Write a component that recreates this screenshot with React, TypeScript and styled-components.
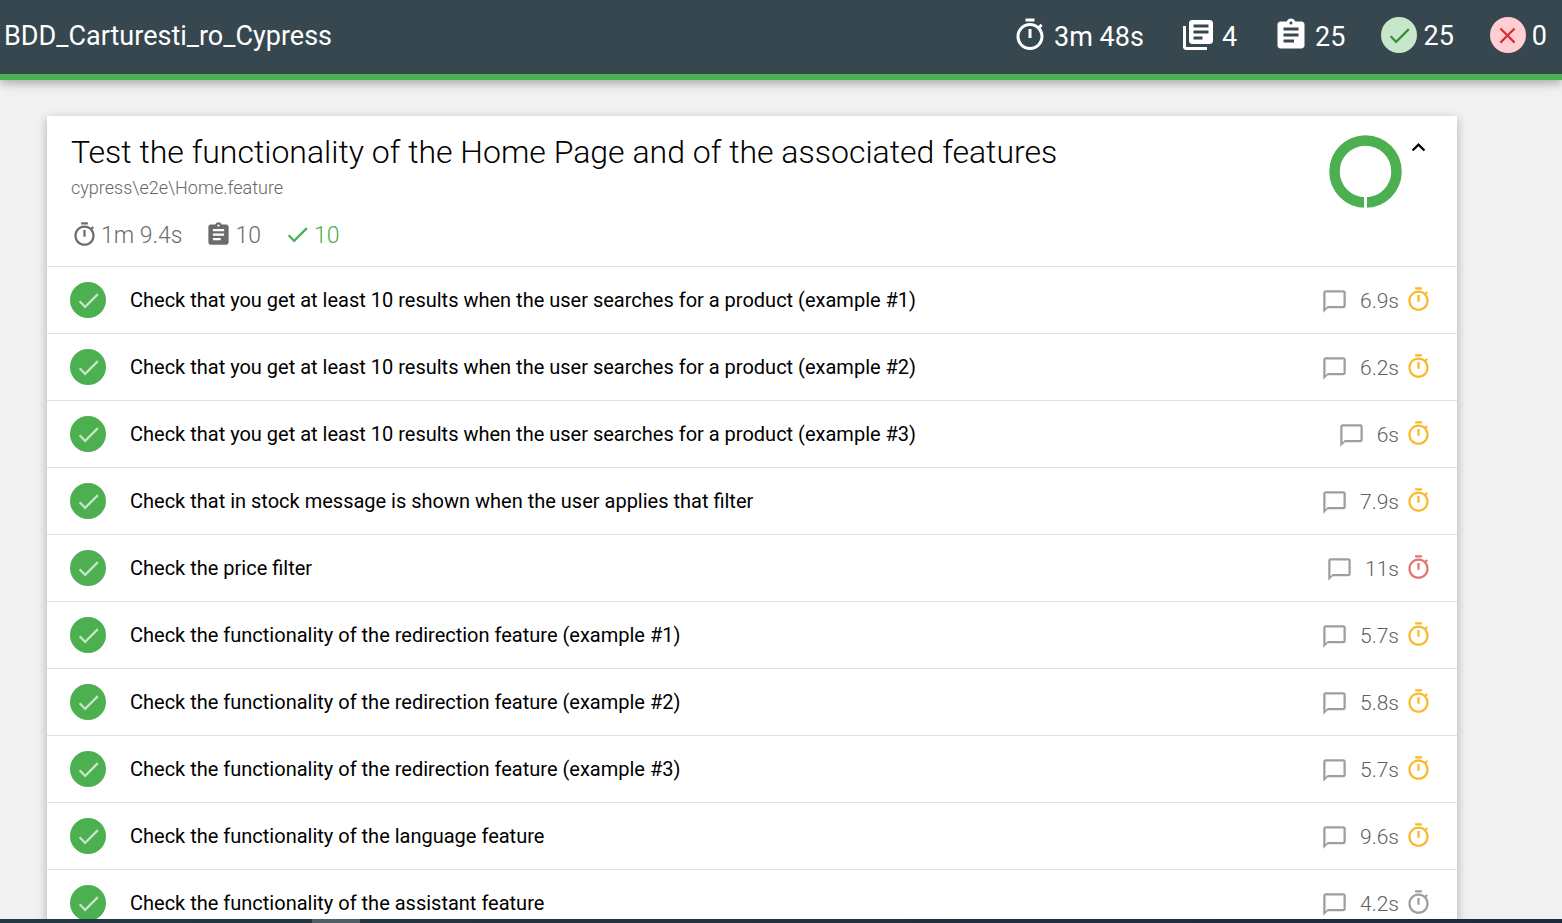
import React from "react";
import styled, { createGlobalStyle } from "styled-components";

const GlobalStyle = createGlobalStyle`
  *, *::before, *::after { box-sizing: border-box; }
  body {
    margin: 0;
    background: #f2f2f2;
    color: #000;
    font-family: Roboto, "Liberation Sans", sans-serif;
  }
`;

const icons = {
  timer:
    "M15 1H9v2h6V1zm-4 13h2V8h-2v6zm8.03-6.61l1.42-1.42c-.43-.51-.9-.99-1.41-1.41l-1.42 1.42C16.07 4.74 14.12 4 12 4c-4.97 0-9 4.03-9 9s4.02 9 9 9 9-4.03 9-9c0-2.12-.74-4.07-1.97-5.61zM12 20c-3.87 0-7-3.13-7-7s3.13-7 7-7 7 3.13 7 7-3.13 7-7 7z",
  books:
    "M4 6H2v14c0 1.1.9 2 2 2h14v-2H4V6zm16-4H8c-1.1 0-2 .9-2 2v12c0 1.1.9 2 2 2h12c1.1 0 2-.9 2-2V4c0-1.1-.9-2-2-2zm-1 9H9V9h10v2zm-4 4H9v-2h6v2zm4-8H9V5h10v2z",
  assignment:
    "M19 3h-4.18C14.4 1.84 13.3 1 12 1c-1.3 0-2.4.84-2.82 2H5c-1.1 0-2 .9-2 2v14c0 1.1.9 2 2 2h14c1.1 0 2-.9 2-2V5c0-1.1-.9-2-2-2zm-7 0c.55 0 1 .45 1 1s-.45 1-1 1-1-.45-1-1 .45-1 1-1zm2 14H7v-2h7v2zm3-4H7v-2h10v2zm0-4H7V7h10v2z",
  check: "M9 16.17L4.83 12l-1.42 1.41L9 19 21 7l-1.41-1.41z",
  close:
    "M19 6.41L17.59 5 12 10.59 6.41 5 5 6.41 10.59 12 5 17.59 6.41 19 12 13.41 17.59 19 19 17.59 13.41 12z",
  chat: "M20 2H4c-1.1 0-2 .9-2 2v18l4-4h14c1.1 0 2-.9 2-2V4c0-1.1-.9-2-2-2zm0 14H6l-2 2V4h16v12z",
  expandLess: "M12 8l-6 6 1.41 1.41L12 10.83l4.59 4.58L18 14z",
};

const Svg = styled.svg`
  display: block;
  flex: none;
  fill: currentColor;
`;

function Icon({ name, size = 27 }: { name: keyof typeof icons; size?: number }) {
  return (
    <Svg width={size} height={size} viewBox="0 0 24 24" aria-hidden="true">
      <path d={icons[name]} />
    </Svg>
  );
}

const Page = styled.div`
  display: flex;
  flex-direction: column;
  height: 100vh;
  overflow: hidden;
`;

const Navbar = styled.header`
  display: flex;
  align-items: flex-start;
  justify-content: space-between;
  flex: none;
  height: 80px;
  padding: 17px 15px 0 4px;
  border-bottom: 6px solid #4caf50;
  background: #37474f;
  color: #fff;
  box-shadow: 0 3px 8px rgba(0, 0, 0, 0.2), 0 3px 15px rgba(0, 0, 0, 0.14);
  z-index: 1;
`;

const ReportTitle = styled.h1`
  margin: 0;
  font-size: 27px;
  line-height: 38px;
  font-weight: 400;
`;

const Totals = styled.ul`
  display: flex;
  gap: 36px;
  margin: 0;
  padding: 0;
  list-style: none;
`;

const Total = styled.li`
  display: flex;
  align-items: flex-start;
  gap: 6px;
  font-size: 27px;
  line-height: 38px;
`;

const TotalCount = styled.span`
  padding-top: 1px;
`;

const Badge = styled.span<{ $bg: string; $fg: string }>`
  display: flex;
  align-items: center;
  justify-content: center;
  flex: none;
  width: 36px;
  height: 36px;
  border-radius: 50%;
  background: ${(p) => p.$bg};
  color: ${(p) => p.$fg};
`;

const Main = styled.main`
  flex: 1;
  min-height: 0;
  overflow: hidden;
  padding: 36px 105px 0 47px;
`;

const SuiteCard = styled.section`
  background: #fff;
  box-shadow: 0 3px 8px rgba(0, 0, 0, 0.18), 0 3px 15px rgba(0, 0, 0, 0.12);
`;

const SuiteHeader = styled.header`
  display: flex;
  align-items: flex-start;
  justify-content: space-between;
  height: 150px;
  padding: 16px 25px 0 24px;
`;

const SuiteTitle = styled.h2`
  margin: 0;
  font-size: 32px;
  line-height: 40px;
  font-weight: 300;
`;

const SuiteFile = styled.h3`
  margin: 4px 0 0;
  color: #666;
  font-size: 18px;
  line-height: 24px;
  font-weight: 300;
`;

const SuiteStats = styled.ul`
  display: flex;
  gap: 23px;
  margin: 21px 0 0;
  padding: 0;
  list-style: none;
`;

const SuiteStat = styled.li<{ $color?: string }>`
  display: flex;
  align-items: flex-start;
  gap: 3px;
  color: ${(p) => p.$color ?? "#6c6c6c"};
  font-size: 23px;
  line-height: 30px;
  font-weight: 300;
`;

const SuiteAside = styled.div`
  display: flex;
  align-items: flex-start;
  gap: 3px;
`;

const Chart = styled.svg`
  display: block;
  margin-top: 3px;
`;

const ToggleButton = styled.button`
  display: block;
  padding: 2px 0 0;
  border: 0;
  background: none;
  color: #000;
  cursor: pointer;
`;

const TestList = styled.ul`
  margin: 0;
  padding: 0;
  list-style: none;
`;

const TestRow = styled.li`
  border-top: 1px solid #e0e0e0;
`;

const TestButton = styled.button`
  display: flex;
  align-items: center;
  width: 100%;
  height: 66px;
  padding: 0 25px 0 23px;
  border: 0;
  background: none;
  color: #000;
  font: inherit;
  text-align: left;
  cursor: pointer;
`;

const TestName = styled.span`
  flex: 1;
  padding-left: 24px;
  font-size: 20px;
  line-height: 24px;
`;

const TestInfo = styled.span`
  display: flex;
  align-items: flex-end;
  color: #9e9e9e;
`;

const Duration = styled.span`
  padding: 1px 6px 1px 12px;
  color: #606060;
  font-size: 21px;
  line-height: 26px;
  font-weight: 300;
`;

const Speed = styled.span<{ $color: string }>`
  padding-bottom: 2px;
  color: ${(p) => p.$color};
`;

const Taskbar = styled.footer`
  display: flex;
  flex: none;
  height: 4px;
  padding-left: 312px;
  background: linear-gradient(90deg, #213a44, #1b2a42);
  z-index: 1;
`;

const TaskbarItem = styled.span`
  width: 48px;
  background: #4e5f67;
`;

const speedColors = { medium: "#fbb829", slow: "#e57373", fast: "#9e9e9e" };

const tests: { name: string; time: string; speed: keyof typeof speedColors }[] = [
  { name: "Check that you get at least 10 results when the user searches for a product (example #1)", time: "6.9s", speed: "medium" },
  { name: "Check that you get at least 10 results when the user searches for a product (example #2)", time: "6.2s", speed: "medium" },
  { name: "Check that you get at least 10 results when the user searches for a product (example #3)", time: "6s", speed: "medium" },
  { name: "Check that in stock message is shown when the user applies that filter", time: "7.9s", speed: "medium" },
  { name: "Check the price filter", time: "11s", speed: "slow" },
  { name: "Check the functionality of the redirection feature (example #1)", time: "5.7s", speed: "medium" },
  { name: "Check the functionality of the redirection feature (example #2)", time: "5.8s", speed: "medium" },
  { name: "Check the functionality of the redirection feature (example #3)", time: "5.7s", speed: "medium" },
  { name: "Check the functionality of the language feature", time: "9.6s", speed: "medium" },
  { name: "Check the functionality of the assistant feature", time: "4.2s", speed: "fast" },
];

export default function App() {
  return (
    <Page>
      <GlobalStyle />
      <Navbar>
        <ReportTitle>BDD_Carturesti_ro_Cypress</ReportTitle>
        <Totals>
          <Total><Icon name="timer" size={36} /><TotalCount>3m 48s</TotalCount></Total>
          <Total><Icon name="books" size={36} /><TotalCount>4</TotalCount></Total>
          <Total><Icon name="assignment" size={36} /><TotalCount>25</TotalCount></Total>
          <Total>
            <Badge $bg="#c8e6c9" $fg="#388e3c"><Icon name="check" /></Badge>25
          </Total>
          <Total>
            <Badge $bg="#ffcdd2" $fg="#d32f2f"><Icon name="close" /></Badge>0
          </Total>
        </Totals>
      </Navbar>
      <Main>
        <SuiteCard>
          <SuiteHeader>
            <div>
              <SuiteTitle>Test the functionality of the Home Page and of the associated features</SuiteTitle>
              <SuiteFile>cypress\e2e\Home.feature</SuiteFile>
              <SuiteStats>
                <SuiteStat><Icon name="timer" />1m 9.4s</SuiteStat>
                <SuiteStat><Icon name="assignment" />10</SuiteStat>
                <SuiteStat $color="#4caf50"><Icon name="check" />10</SuiteStat>
              </SuiteStats>
            </div>
            <SuiteAside>
              <Chart width="73" height="73" viewBox="0 0 73 73" role="img" aria-label="All tests passed">
                <circle cx="36.5" cy="36.5" r="31" fill="none" stroke="#4caf50" strokeWidth="10.5" />
                <path d="M36.5 60v13" stroke="#fff" strokeWidth="3" />
              </Chart>
              <ToggleButton type="button" aria-label="Collapse suite"><Icon name="expandLess" /></ToggleButton>
            </SuiteAside>
          </SuiteHeader>
          <TestList>
            {tests.map((t) => (
              <TestRow key={t.name}>
                <TestButton type="button">
                  <Badge $bg="#4caf50" $fg="#c8e6c9"><Icon name="check" /></Badge>
                  <TestName>{t.name}</TestName>
                  <TestInfo>
                    <Icon name="chat" />
                    <Duration>{t.time}</Duration>
                    <Speed $color={speedColors[t.speed]}><Icon name="timer" /></Speed>
                  </TestInfo>
                </TestButton>
              </TestRow>
            ))}
          </TestList>
        </SuiteCard>
      </Main>
      <Taskbar><TaskbarItem /></Taskbar>
    </Page>
  );
}
